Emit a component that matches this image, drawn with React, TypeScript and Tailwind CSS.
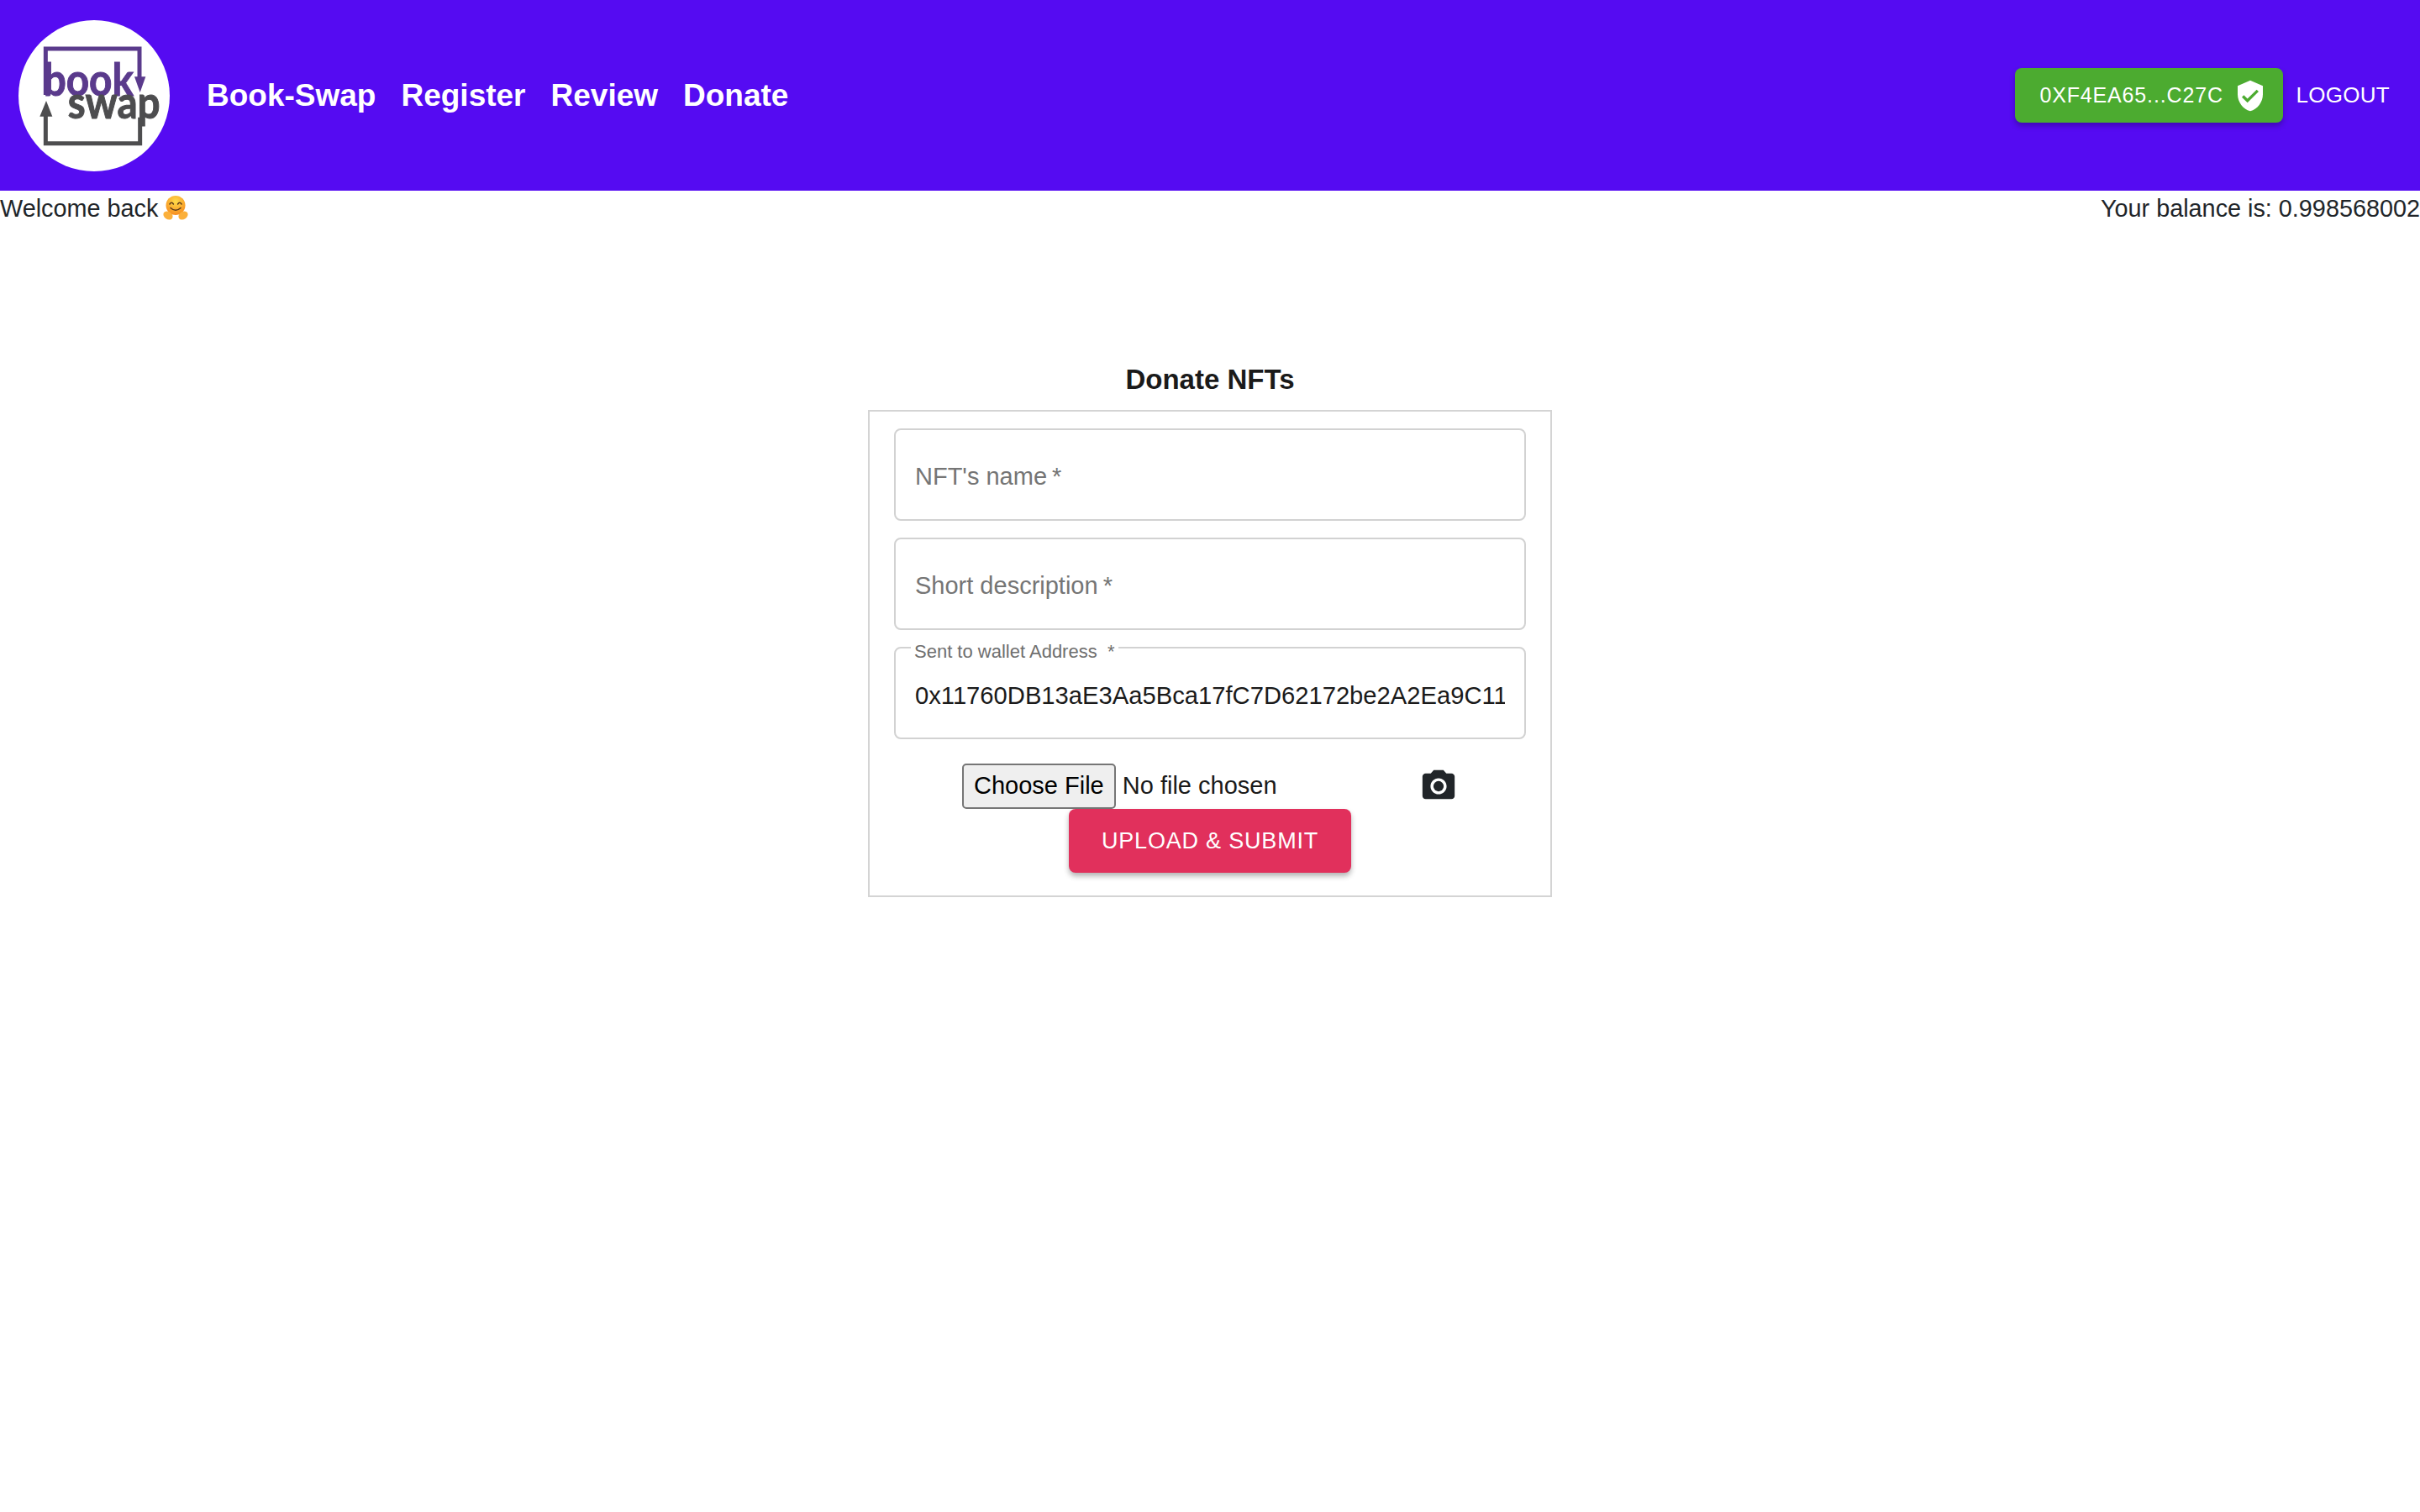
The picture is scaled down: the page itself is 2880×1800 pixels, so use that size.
import React from 'react';

const font = "font-['Liberation_Sans',Arial,sans-serif]";

const BookSwapLogo = () => (
  <div className="w-[180px] h-[180px] rounded-full bg-white overflow-hidden shrink-0">
    <svg viewBox="36 38 540 540" className="w-full h-full">
      <path d="M133 305V140H468V245" fill="none" stroke="#5a3a8c" strokeWidth="15" />
      <path d="M450 240H490L470 296Z" fill="#5a3a8c" />
      <path d="M133 375V478H470V385" fill="none" stroke="#4d4d4f" strokeWidth="15" />
      <path d="M112 382H157L135 326Z" fill="#4d4d4f" />
      <text x="125" y="309" fontFamily="Lato, sans-serif" fontWeight="700" fontSize="160" textLength="322" lengthAdjust="spacingAndGlyphs" fill="#5a3a8c" stroke="#5a3a8c" strokeWidth="3">book</text>
      <text x="212" y="389" fontFamily="Lato, sans-serif" fontWeight="700" fontSize="158" textLength="330" lengthAdjust="spacingAndGlyphs" fill="#4d4d4f" stroke="#4d4d4f" strokeWidth="3">swap</text>
    </svg>
  </div>
);

const HugEmoji = () => (
  <svg viewBox="0 0 32 30" className="w-[32px] h-[30px] inline-block align-[-5px] ml-[5px]">
    <defs>
      <radialGradient id="hug" cx="50%" cy="30%" r="70%">
        <stop offset="0%" stopColor="#ffdc4a" />
        <stop offset="100%" stopColor="#f78c1e" />
      </radialGradient>
    </defs>
    <circle cx="16" cy="11.5" r="11.5" fill="url(#hug)" />
    <path d="M9 10q2.2-3.4 4.4 0M18.6 10q2.2-3.4 4.4 0" fill="none" stroke="#5b3a1a" strokeWidth="1.5" strokeLinecap="round" />
    <path d="M10 14.5q6 5.5 12 0" fill="none" stroke="#5b3a1a" strokeWidth="1.6" strokeLinecap="round" />
    <ellipse cx="7" cy="23.5" rx="6" ry="4.5" transform="rotate(35 7 23.5)" fill="#fbb03b" />
    <ellipse cx="25" cy="23.5" rx="6" ry="4.5" transform="rotate(-35 25 23.5)" fill="#fbb03b" />
  </svg>
);

const OutlinedField = ({ label, value }: { label: string; value?: string }) => (
  <div className="relative h-[110px] mb-[20px]">
    <input
      type="text"
      readOnly
      value={value ?? ''}
      className="w-full h-full border-2 border-[#d2d2d2] rounded-[8px] px-[23px] pt-[6px] text-[29.2px] text-[#1a1a1a] bg-transparent outline-none"
    />
    {value ? (
      <label className="absolute left-[20px] top-[-4px] px-[4px] bg-white text-[22px] leading-[20px] text-[#6f6f6f] whitespace-pre">
        {label} {' '}*
      </label>
    ) : (
      <label className="absolute left-[25px] top-[35px] text-[29px] leading-[44px] text-[#757575]">
        {label}
        <span className="ml-[6px]">*</span>
      </label>
    )}
  </div>
);

export default function App() {
  return (
    <div className={`${font} min-h-[1800px] bg-white text-[#212529] text-[28.8px]`}>
      {/* Header */}
      <header className="h-[227px] bg-[#550bf2] flex items-center justify-between pl-[22px] pr-[36px]">
        <div className="flex items-center">
          <BookSwapLogo />
          <nav className="flex items-center gap-[30px] ml-[44px] text-[37px] font-bold text-white">
            <a>Book-Swap</a>
            <a>Register</a>
            <a>Review</a>
            <a>Donate</a>
          </nav>
        </div>
        <div className="flex items-center">
          <button className="h-[65px] w-[319px] rounded-[8px] bg-[#4cab30] text-white text-[25px] tracking-[0.85px] flex items-center pl-[29px] gap-[12px] shadow-[0_4px_6px_rgba(0,0,0,0.25)]">
            0XF4EA65...C27C
            <svg viewBox="0 0 24 24" className="w-[40px] h-[40px]" fill="#ffffff">
              <path d="M12 1L3 5v6c0 5.55 3.84 10.74 9 12 5.16-1.26 9-6.45 9-12V5l-9-4zm-2 16l-4-4 1.41-1.41L10 14.17l6.59-6.59L18 9l-8 8z" />
            </svg>
          </button>
          <button className="ml-[15px] text-white text-[26px] tracking-[0.3px]">LOGOUT</button>
        </div>
      </header>

      {/* Welcome row */}
      <div className="flex justify-between h-[48px] leading-[42px]">
        <span>
          Welcome back
          <HugEmoji />
        </span>
        <span>Your balance is: 0.998568002</span>
      </div>

      {/* Donate form */}
      <main className="flex flex-col items-center pt-[157px]">
        <h2 className="text-[33px] leading-[40px] font-bold text-[#1a1a1a] mb-[16px]">Donate NFTs</h2>
        <form className="w-[814px] h-[580px] border-2 border-[#d4d4d4] px-[29px] pt-[20px]">
          <OutlinedField label="NFT's name" />
          <OutlinedField label="Short description" />
          <OutlinedField label="Sent to wallet Address" value="0x11760DB13aE3Aa5Bca17fC7D62172be2A2Ea9C11" />
          <div className="flex items-center justify-center h-[55px] mt-[28px]">
            <input
              type="file"
              className="w-[506px] text-[29px] text-[#1a1a1a] file:h-[54px] file:px-[12px] file:mr-[8px] file:bg-[#efefef] file:border-2 file:border-[#767676] file:rounded-[5px] file:text-black"
            />
            <svg viewBox="0 0 24 24" className="w-[46px] h-[46px] ml-[38px] shrink-0" fill="#212529">
              <circle cx="12" cy="12" r="3.2" />
              <path d="M9 2L7.17 4H4c-1.1 0-2 .9-2 2v12c0 1.1.9 2 2 2h16c1.1 0 2-.9 2-2V6c0-1.1-.9-2-2-2h-3.17L15 2H9zm3 15c-2.76 0-5-2.24-5-5s2.24-5 5-5 5 2.24 5 5-2.24 5-5 5z" />
            </svg>
          </div>
          <div className="flex justify-center">
            <button
              type="button"
              className="w-[336px] h-[76px] rounded-[8px] bg-[#e1305c] text-white text-[27px] tracking-[0.8px] shadow-[0_4px_6px_rgba(0,0,0,0.3)]"
            >
              UPLOAD &amp; SUBMIT
            </button>
          </div>
        </form>
      </main>
    </div>
  );
}
